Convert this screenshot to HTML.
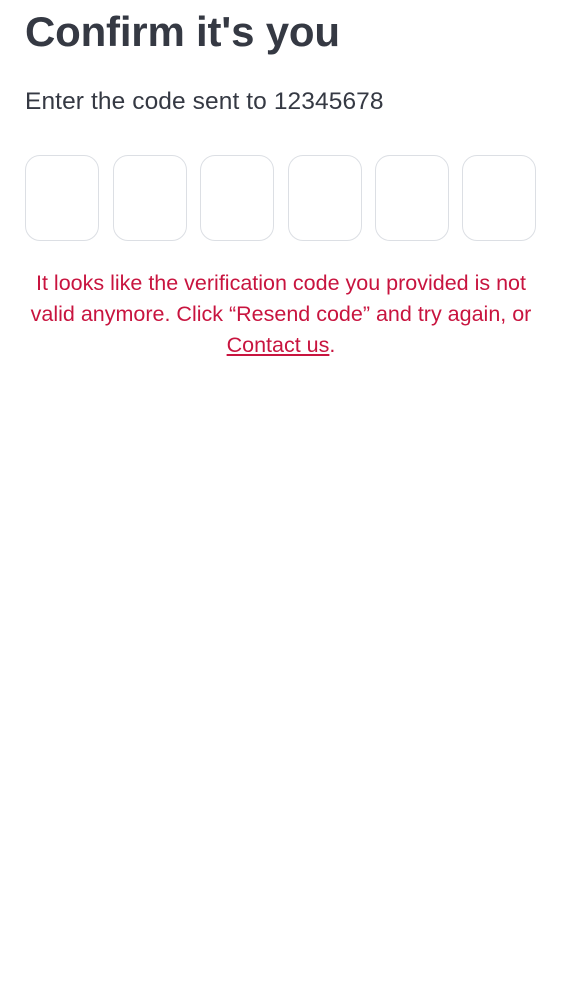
<!DOCTYPE html>
<html><head><meta charset="utf-8"><style>
html,body{margin:0;padding:0;background:#fff;width:562px;height:1000px;overflow:hidden}
body{font-family:"Liberation Sans",Arial,sans-serif;color:#353943}
h1{position:absolute;left:25px;top:3px;margin:0;font-size:42px;font-weight:bold;line-height:58px;letter-spacing:-0.2px}
.sub{position:absolute;left:25px;top:86px;font-size:24.5px;line-height:32px;margin:0;letter-spacing:0.1px}
.box{position:absolute;top:155px;width:72px;height:84px;border:1.5px solid #dcdfe4;border-radius:15px}
.err{position:absolute;left:0;width:562px;top:268px;text-align:center;color:#c8143f;font-size:21.5px;line-height:31px;margin:0;white-space:nowrap}
.err a{color:#c8143f;text-decoration:underline}
</style></head><body>
<h1>Confirm it's you</h1>
<p class="sub">Enter the code sent to 12345678</p>
<div class="box" style="left:25px"></div>
<div class="box" style="left:113px"></div>
<div class="box" style="left:200px"></div>
<div class="box" style="left:288px"></div>
<div class="box" style="left:375px"></div>
<div class="box" style="left:462px"></div>
<p class="err">It looks like the verification code you provided is not<br>valid anymore. Click “Resend code” and try again, or<br><a>Contact us</a>.</p>
</body></html>
